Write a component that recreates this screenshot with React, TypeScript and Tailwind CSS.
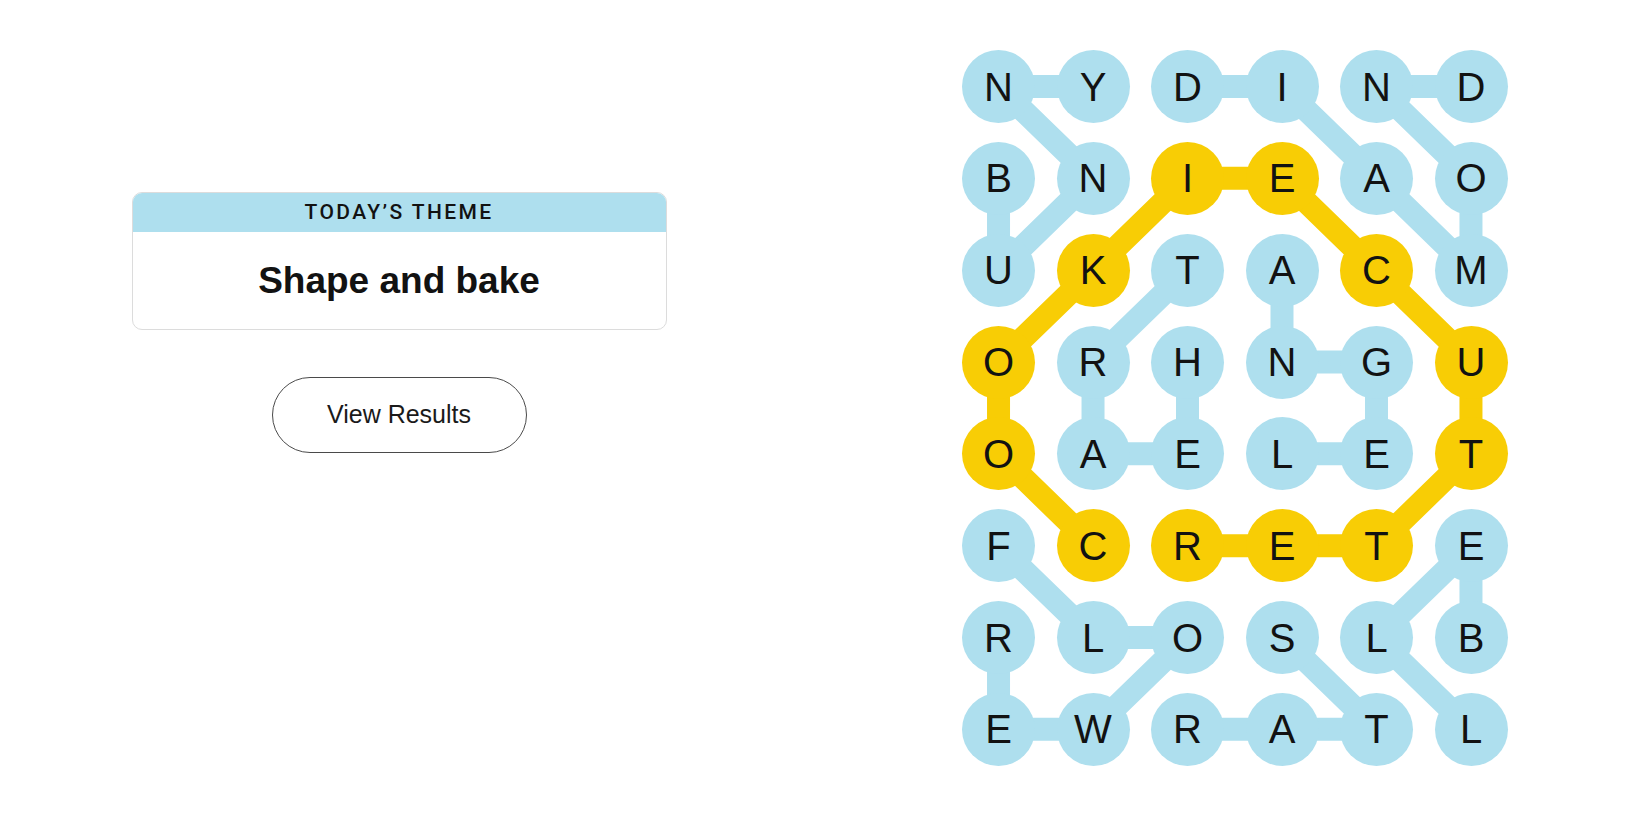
const ROWS = ['NYDIND', 'BNIEAO', 'UKTACM', 'ORHNGU', 'OAELET', 'FCRETE', 'RLOSLB', 'EWRATL']

// cells of the spangram, shown in yellow
const SPANGRAM = ['5,1', '4,0', '3,0', '2,1', '1,2', '1,3', '2,4', '3,5', '4,5', '5,4', '5,3', '5,2']

const BLUE_WORDS: [number, number][][] = [
  [[1, 0], [2, 0], [1, 1], [0, 0], [0, 1]],
  [[0, 2], [0, 3], [1, 4], [2, 5], [1, 5], [0, 4], [0, 5]],
  [[3, 2], [4, 2], [4, 1], [3, 1], [2, 2]],
  [[2, 3], [3, 3], [3, 4], [4, 4], [4, 3]],
  [[5, 0], [6, 1], [6, 2], [7, 1], [7, 0], [6, 0]],
  [[6, 3], [7, 4], [7, 3], [7, 2]],
  [[6, 5], [5, 5], [6, 4], [7, 5]],
]

const YELLOW_WORD: [number, number][] = [
  [5, 1], [4, 0], [3, 0], [2, 1], [1, 2], [1, 3], [2, 4], [3, 5], [4, 5], [5, 4], [5, 3], [5, 2],
]

const R = 36.5
const DX = 94.5
const DY = 91.85

function toPoints(word: [number, number][]) {
  return word.map(([r, c]) => `${R + c * DX},${R + r * DY}`).join(' ')
}

const font = { fontFamily: '"Liberation Sans", Arial, sans-serif' }

export default function App() {
  return (
    <div className="flex w-full h-[825px] bg-white text-[#121212]" style={font}>
      <div className="w-[798px] flex flex-col items-center pt-[192px]">
        <ThemeCard />
        <button className="mt-[47px] w-[255px] h-[76px] rounded-full border border-[#4a4a4a] text-[25px] text-[#1a1a1a]">
          View Results
        </button>
      </div>
      <div className="flex-1 pl-[164px] pt-[50px]">
        <Board />
      </div>
    </div>
  )
}

function ThemeCard() {
  return (
    <div className="w-[535px] rounded-[10px] border border-[#dcdcdc] overflow-hidden">
      <div className="h-[39px] bg-[#aedfee] flex items-center justify-center font-['Roboto',sans-serif] font-medium text-[21px] tracking-[2.4px] uppercase">
        Today’s Theme
      </div>
      <div className="h-[97px] flex items-center justify-center text-[37px] font-bold">Shape and bake</div>
    </div>
  )
}

function Board() {
  return (
    <div className="relative w-[546px]">
      <svg className="absolute inset-0 w-full h-full" viewBox="0 0 546 716">
        {BLUE_WORDS.map((w, i) => (
          <polyline key={i} points={toPoints(w)} fill="none" stroke="#aedfee" strokeWidth={23} strokeLinejoin="round" />
        ))}
        <polyline points={toPoints(YELLOW_WORD)} fill="none" stroke="#f8cd05" strokeWidth={23} strokeLinejoin="round" />
      </svg>
      <div className="relative grid grid-cols-[repeat(6,73px)] gap-x-[21.5px] gap-y-[18.85px]">
        {ROWS.map((row, r) =>
          row.split('').map((ch, c) => (
            <div
              key={`${r}-${c}`}
              className={
                'size-[73px] rounded-full flex items-center justify-center text-[40px] ' +
                (SPANGRAM.includes(`${r},${c}`) ? 'bg-[#f8cd05]' : 'bg-[#aedfee]')
              }
            >
              {ch}
            </div>
          ))
        )}
      </div>
    </div>
  )
}
